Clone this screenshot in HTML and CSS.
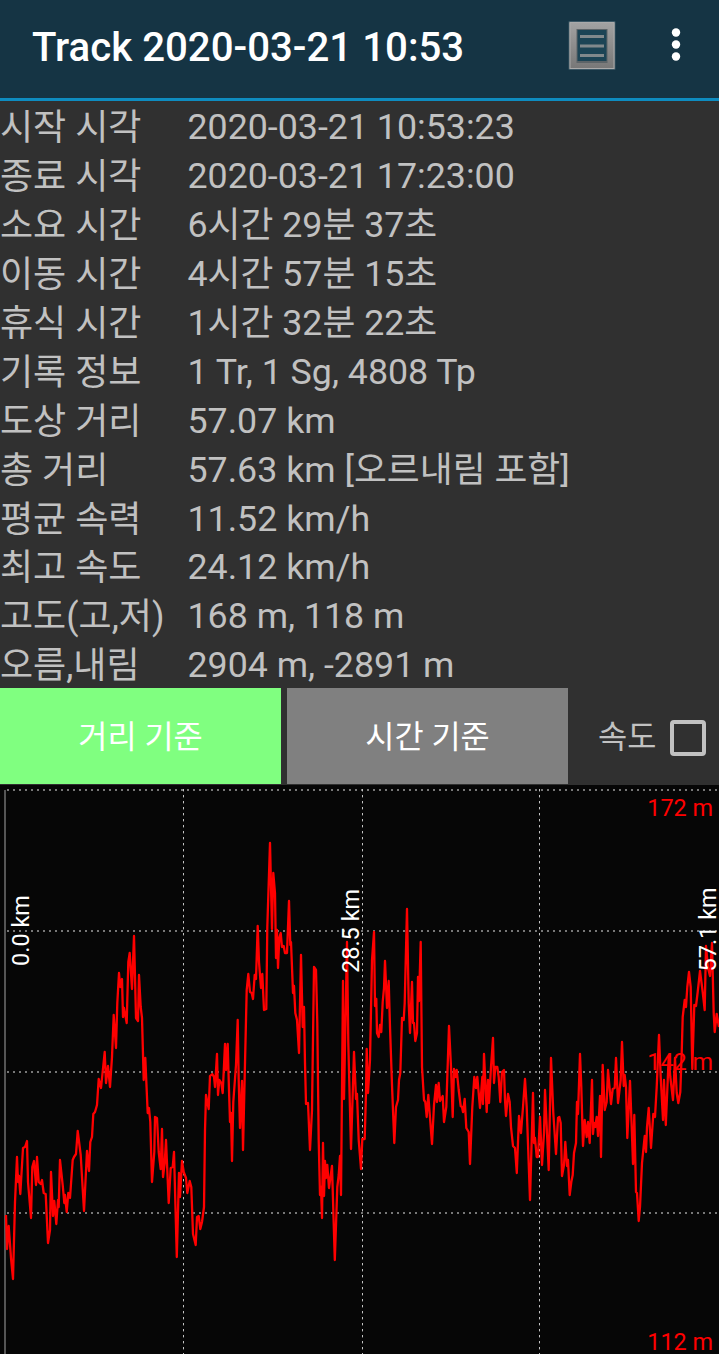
FILE: index.html
```html
<!DOCTYPE html>
<html lang="ko">
<head>
  <meta charset="UTF-8">
  <meta name="viewport" content="width=device-width, initial-scale=1.0">
  <title>Track 2020-03-21 10:53</title>
  <link rel="stylesheet" href="styles.css">
</head>
<body>
  <header>
    <h1>Track 2020-03-21 10:53</h1>
    <svg class="list-icon" width="52" height="56" viewBox="0 0 52 56">
      <defs>
        <linearGradient id="metal" x1="0" y1="0" x2="0" y2="1">
          <stop offset="0" stop-color="#a3a3a3"/>
          <stop offset="1" stop-color="#777"/>
        </linearGradient>
      </defs>
      <rect class="icon-glow" x="2.5" y="4" width="47" height="49" rx="1"/>
      <rect x="3.5" y="5" width="45" height="47" fill="url(#metal)"/>
      <path class="icon-edge" d="M4 52V5.5H48V52"/>
      <path class="icon-base" d="M4 51.5H48"/>
      <rect class="icon-shade" x="10.5" y="12" width="31" height="34"/>
      <rect class="icon-page" x="11.5" y="13" width="29" height="31"/>
      <path class="icon-lines" d="M14 19.5H38M14 29H38M14 38.5H38"/>
    </svg>
    <svg class="more-icon" width="12" height="36" viewBox="0 0 12 36">
      <circle cx="6" cy="5.5" r="4.2"/>
      <circle cx="6" cy="17.5" r="4.2"/>
      <circle cx="6" cy="29.5" r="4.2"/>
    </svg>
  </header>

  <dl class="info">
    <dt>시작 시각</dt><dd>2020-03-21 10:53:23</dd>
    <dt>종료 시각</dt><dd>2020-03-21 17:23:00</dd>
    <dt>소요 시간</dt><dd>6시간 29분 37초</dd>
    <dt>이동 시간</dt><dd>4시간 57분 15초</dd>
    <dt>휴식 시간</dt><dd>1시간 32분 22초</dd>
    <dt>기록 정보</dt><dd>1 Tr, 1 Sg, 4808 Tp</dd>
    <dt>도상 거리</dt><dd>57.07 km</dd>
    <dt>총 거리</dt><dd>57.63 km [오르내림 포함]</dd>
    <dt>평균 속력</dt><dd>11.52 km/h</dd>
    <dt>최고 속도</dt><dd>24.12 km/h</dd>
    <dt>고도(고,저)</dt><dd>168 m, 118 m</dd>
    <dt>오름,내림</dt><dd>2904 m, -2891 m</dd>
  </dl>

  <div class="controls">
    <button class="active">거리 기준</button>
    <button>시간 기준</button>
    <label><span>속도</span><input type="checkbox"></label>
  </div>

  <svg class="chart" width="719" height="569" viewBox="0 785 719 569">
    <path class="axis" d="M5 790V1354"/>
    <path class="grid-h" d="M7 790H719M7 931H719M7 1072H719M7 1213H719"/>
    <path class="grid-v" d="M183.5 789V1354M362.5 789V1354M539.5 789V1354"/>
    <g class="elevation">
      <text x="713" y="815.5">172 m</text>
      <text x="713" y="1069.5">142 m</text>
      <text x="713" y="1349.5">112 m</text>
    </g>
    <polyline class="track" points="
      6,1215 7,1249 8.7,1226 11,1258 13,1279 15,1202 17,1157 18,1182 19,1176 20.3,1194 23,1148 25,1147 27,1141 28,1182 31,1218
      32.3,1167 34,1161 36,1185 37,1157 38.7,1182 40.7,1184 42,1180 43.7,1193 45.7,1194 48,1243 50,1230 51,1172 53,1216 54.3,1201
      56.3,1224 58,1200 58.7,1207 60,1160 62.7,1185 64.3,1203 65,1195 66.7,1212 68.3,1193 70,1198 72.7,1160 74,1157 76,1154
      77.7,1131 80.7,1155 84,1211 87,1151 89,1171 90.3,1142 92,1137 93.3,1114 95,1112 97,1105 98.7,1079 101,1088 104.7,1052
      106,1083 108,1066 110,1087 112,1057 113.7,1015 116,1048 117.3,1003 119,973 120.3,987 122,979 123,1017 124,1008 126.7,1023
      128.3,962 129.7,953 132,989 134,936 136,1018 138,1021 139,975 140.7,1007 142,1018 143.7,1080 145.3,1058 147.7,1113
      149,1108 150.3,1122 152,1182 154.3,1152 155,1117 157,1118 158.7,1152 160.7,1169 162,1129 163,1177 164.7,1163 166,1140
      168.7,1203 170.7,1168 172.7,1167 174,1152 176.8,1257 179,1173 180,1197 182,1161 183.7,1172 186,1178 187.3,1193 189.7,1181
      191.3,1187 193,1234 195.7,1245 197,1217 198.7,1216 200.3,1229 202,1222 204,1207 205,1130 206,1095 208.7,1109 210,1076
      212.3,1074 214,1077 215,1087 217,1054 218,1095 219.3,1080 221.3,1083 222.7,1093 225,1044 226,1070 227.7,1044 229,1090
      230,1122 231,1113 232,1161 233.3,1102 236,1065 237.7,1020 238.7,1080 240,1128 242,1081 243,1150 245,1063 246.7,990
      248.3,974 250,992 251.7,993 253,999 254.7,975 256,979 257.7,926 259,962 261,988 262.3,974 264,1010 266.3,1009 267.3,927
      270,843 272,929 273.3,873 275,893 276,958 277,930 278,968 279.3,938 280.7,933 282,947 283.7,946 285,953 287,953 289,901
      290.3,945 291,942 293,993 294,986 295.3,1013 297,1020 299,1053 301,955 302.7,1027 304,1007 305,1063 306,1104 308,1103
      310,1150 312,1110 314,967 316,970 317.3,1023 318.7,1140 320,1195 321,1187 322,1218 323,1143 324,1196 325,1161 326,1178
      327.3,1165 329,1188 332,1166 334.8,1260 337.3,1187 338.7,1175 340,1156 341,1195 343,981 344,1099 347,942 348.3,1043
      351,1149 354,1052 356,1099 357,1094 358.7,1140 361,1169 362.3,1139 364.7,1139 366,1093 366.7,1049 368,1093 370,1060
      372,960 374,932 375,1006 376.3,999 377,1033 378.7,1037 380,1025 381.3,1032 382.7,1002 384,988 385,961 387,1008
      388.7,981 390,1027 392,1085 394.3,1143 396,1107 398,1100 399,1080 400.3,1073 402,1018 403.7,1020 404.7,1003 407,909
      408.7,1003 410,1033 412,982 413,1023 414,1023 415.3,1041 417,1033 418,977 419,1001 420.7,942 422,1067 424,1100
      425.3,1102 426.7,1117 428.3,1095 432,1144 434,1105 436,1085 437,1102 438.7,1083 440,1101 442.7,1096 444,1122 446.3,1107
      449,1026 451,1067 452.7,1117 454,1069 455.7,1077 456.7,1070 458.7,1090 460.7,1106 462,1107 463,1112 464.7,1099
      466.3,1128 468.7,1132 470,1164 472.3,1107 474.3,1077 476,1088 477.3,1077 480,1108 482.3,1077 483,1104 484,1054
      486.7,1112 488,1080 489,1103 491,1067 493,1038 494,1083 495.3,1067 497.3,1067 498.7,1077 500.3,1102 502,1072 504,1070
      505,1100 506,1116 508,1094 509.7,1102 511,1127 513,1146 515,1148 516.8,1173 519,1116 521,1133 523,1107 525,1079
      526.7,1107 530,1200 533,1093 534,1143 535,1138 536.7,1157 538,1157 540,1117 542,1165 544,1133 545,1090 548.7,1170
      551,1058 553.3,1113 556,1154 558,1118 559.3,1117 560.7,1123 562,1176 564,1165 565.3,1142 567,1166 568,1160 569.7,1195
      571.3,1182 572.7,1175 574,1153 576,1143 577,1102 578,1114 580,1054 581.3,1087 583,1146 584.7,1120 586.7,1137 588,1122
      589.7,1143 592,1080 593,1134 594,1123 595.3,1127 596.7,1117 598,1136 600,1096 601,1157 602.7,1065 604.7,1110
      606.7,1102 608,1070 611,1104 612.7,1089 614.7,1088 616,1058 618,1103 620.7,1080 622,1042 623.7,1086 624.7,1075
      626,1087 627.3,1138 630,1081 631.7,1127 633,1164 634.3,1115 636,1192 637,1193 638.7,1221 640,1207 642,1163 644.7,1136
      646,1152 647,1127 648.7,1108 651,1148 653.3,1114 655,1117 656.7,1087 659,1035 660.7,1077 663,1120 664,1080 665.8,1125
      668.7,1057 670.3,1077 673,1100 675,1058 676.7,1093 678.3,1103 680.3,1092 681.7,1053 682.7,1017 684.7,1000 686,1007
      687.3,987 689,972 690.7,987 692.3,1069 694.3,1005 696,1006 697.7,992 700,971 702.7,992 704.7,1010 706,946 708,968
      710,976 712,943 713.7,1013 714.7,1032 716.7,1014 719,1027"/>
    <g class="distance">
      <text transform="translate(29 966) rotate(-90)">0.0 km</text>
      <text transform="translate(359 973) rotate(-90)">28.5 km</text>
      <text transform="translate(716 971.5) rotate(-90)">57.1 km</text>
    </g>
  </svg>
</body>
</html>
```

FILE: styles.css
```css
* { margin: 0; padding: 0; box-sizing: border-box; }
body {
  width: 719px;
  font-family: Roboto, "Noto Sans CJK KR", sans-serif;
  background: #303030;
  color: #c1c1c1;
  overflow: hidden;
}

header {
  display: flex;
  align-items: center;
  height: 101px;
  padding: 0 37px 9px 32px;
  background: #153444;
  border-bottom: 3px solid #0e8cc0;
}
h1 { flex: 1; padding-top: 6px; font-size: 40.2px; font-weight: 500; line-height: 48px; color: #fff; white-space: nowrap; }
.list-icon { margin-right: 52px; }
.icon-glow { fill: #55707c; opacity: 0.6; }
.icon-edge { fill: none; stroke: #aaa; }
.icon-base { stroke: #aaa; }
.icon-shade { fill: #5c6468; }
.icon-page { fill: #1c4455; }
.icon-lines { stroke: #81898c; stroke-width: 3; }
.more-icon { fill: #fff; }

.info {
  display: grid;
  grid-template-columns: 187.5px 1fr;
  grid-auto-rows: 48.95px;
  height: 587px;
  font-size: 36px;
  line-height: 54px;
  white-space: nowrap;
}
dd { font-size: 35.75px; line-height: 53px; }

.controls { display: flex; height: 97px; padding-bottom: 1px; }
button {
  width: 281px;
  margin-right: 6px;
  padding-bottom: 4px;
  border: none;
  background: #808080;
  color: #fff;
  font-family: inherit;
  font-size: 31.7px;
}
button.active { background: #80ff80; }
label { display: flex; align-items: center; margin-left: 24px; font-size: 31.7px; }
label span { padding-bottom: 4px; }
input {
  appearance: none;
  width: 36px;
  height: 36px;
  margin: 3px 0 0 14px;
  border: 4px solid #c1c1c1;
  border-radius: 4px;
}

.chart { display: block; background: #060606; }
.axis { stroke: #555; stroke-width: 2; }
.grid-h { stroke: #777; stroke-width: 2; stroke-dasharray: 2 4; }
.grid-v { stroke: #c4c4c4; stroke-dasharray: 2.4 3.6; }
.track { fill: none; stroke: #f00; stroke-width: 2.3; stroke-linejoin: round; }
.elevation { fill: #f00; font-size: 23.4px; text-anchor: end; }
.distance { fill: #fff; font-size: 23.5px; }
```
